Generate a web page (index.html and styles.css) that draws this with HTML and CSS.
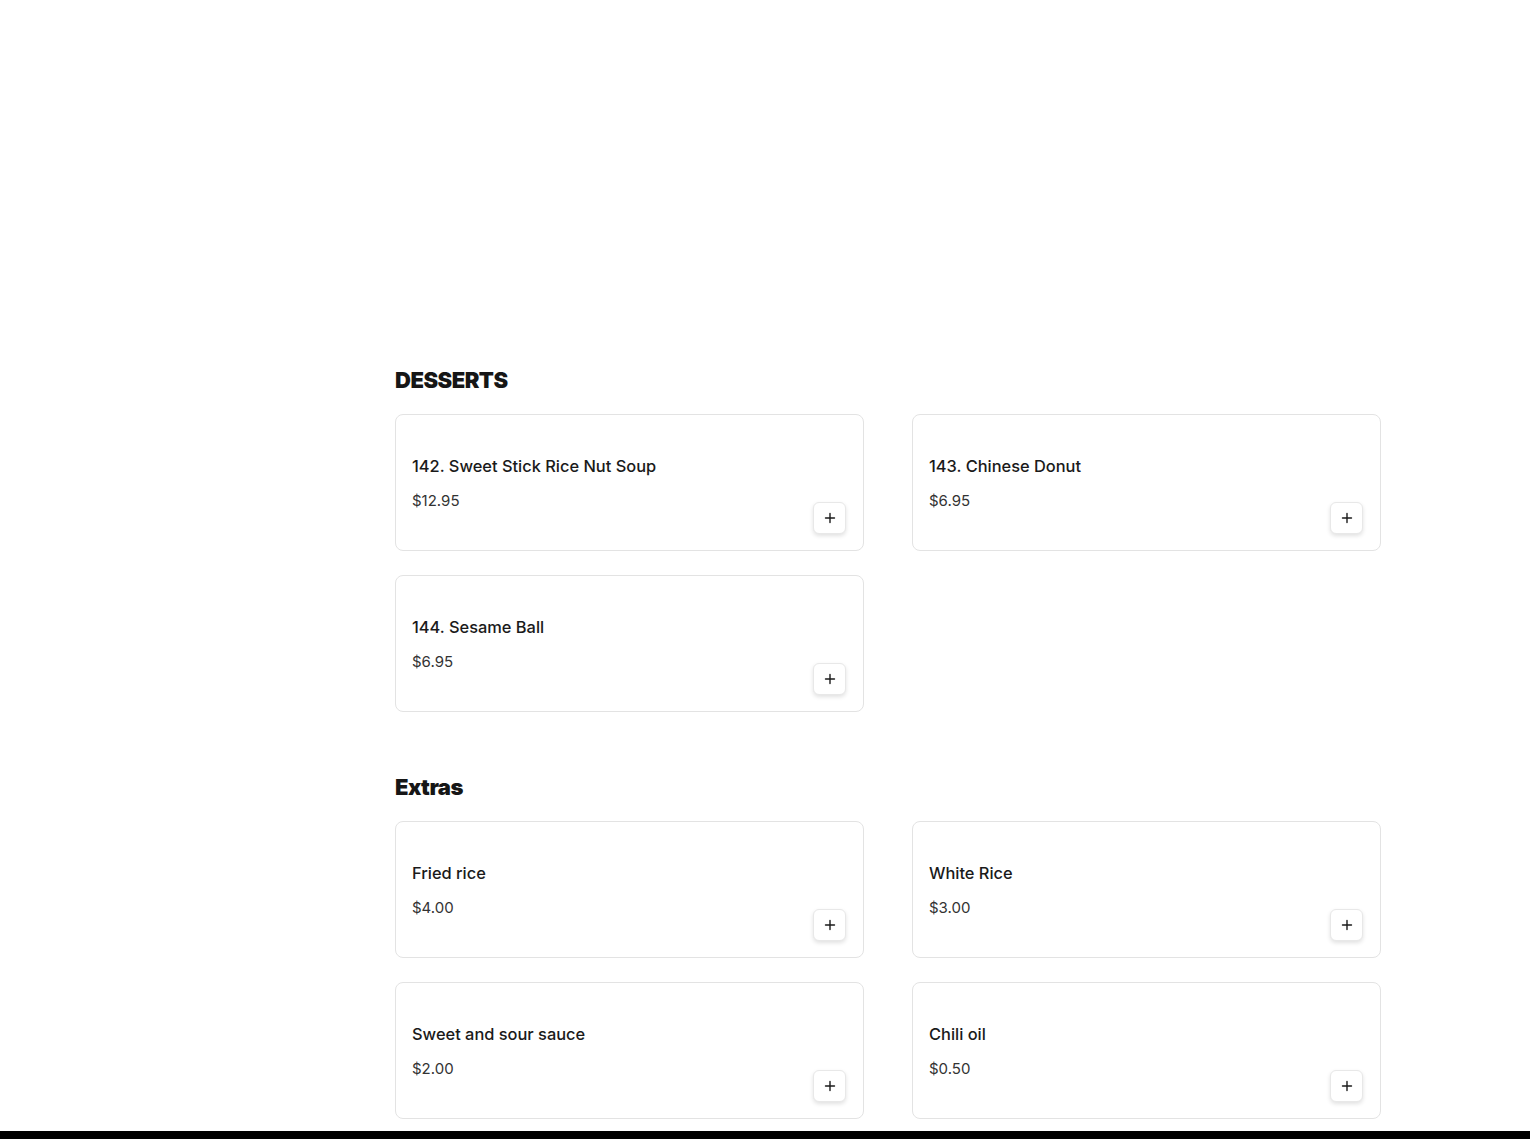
FILE: index.html
```html
<!DOCTYPE html>
<html lang="en">
<head>
<meta charset="utf-8">
<title>Menu</title>
<link rel="stylesheet" href="styles.css">
</head>
<body>
<main class="menu">
  <section class="category">
    <h2 class="category-title">DESSERTS</h2>
    <div class="items">
      <article class="item">
        <div class="info"><h3 class="name">142. Sweet Stick Rice Nut Soup</h3><p class="price">$12.95</p></div>
        <button class="add" aria-label="Add"><svg viewBox="0 0 12 12" width="12" height="12"><path d="M6 1.5v9M1.5 6h9" stroke="#1a1a1a" stroke-width="1.4" stroke-linecap="round"/></svg></button>
      </article>
      <article class="item">
        <div class="info"><h3 class="name">143. Chinese Donut</h3><p class="price">$6.95</p></div>
        <button class="add" aria-label="Add"><svg viewBox="0 0 12 12" width="12" height="12"><path d="M6 1.5v9M1.5 6h9" stroke="#1a1a1a" stroke-width="1.4" stroke-linecap="round"/></svg></button>
      </article>
      <article class="item">
        <div class="info"><h3 class="name">144. Sesame Ball</h3><p class="price">$6.95</p></div>
        <button class="add" aria-label="Add"><svg viewBox="0 0 12 12" width="12" height="12"><path d="M6 1.5v9M1.5 6h9" stroke="#1a1a1a" stroke-width="1.4" stroke-linecap="round"/></svg></button>
      </article>
    </div>
  </section>
  <section class="category">
    <h2 class="category-title">Extras</h2>
    <div class="items">
      <article class="item">
        <div class="info"><h3 class="name">Fried rice</h3><p class="price">$4.00</p></div>
        <button class="add" aria-label="Add"><svg viewBox="0 0 12 12" width="12" height="12"><path d="M6 1.5v9M1.5 6h9" stroke="#1a1a1a" stroke-width="1.4" stroke-linecap="round"/></svg></button>
      </article>
      <article class="item">
        <div class="info"><h3 class="name">White Rice</h3><p class="price">$3.00</p></div>
        <button class="add" aria-label="Add"><svg viewBox="0 0 12 12" width="12" height="12"><path d="M6 1.5v9M1.5 6h9" stroke="#1a1a1a" stroke-width="1.4" stroke-linecap="round"/></svg></button>
      </article>
      <article class="item">
        <div class="info"><h3 class="name">Sweet and sour sauce</h3><p class="price">$2.00</p></div>
        <button class="add" aria-label="Add"><svg viewBox="0 0 12 12" width="12" height="12"><path d="M6 1.5v9M1.5 6h9" stroke="#1a1a1a" stroke-width="1.4" stroke-linecap="round"/></svg></button>
      </article>
      <article class="item">
        <div class="info"><h3 class="name">Chili oil</h3><p class="price">$0.50</p></div>
        <button class="add" aria-label="Add"><svg viewBox="0 0 12 12" width="12" height="12"><path d="M6 1.5v9M1.5 6h9" stroke="#1a1a1a" stroke-width="1.4" stroke-linecap="round"/></svg></button>
      </article>
    </div>
  </section>
</main>
<div class="bottom-bar"></div>
</body>
</html>
```
FILE: styles.css
```css
* { box-sizing: border-box; }
html, body { margin: 0; padding: 0; background: #fff; }
body {
  font-family: Inter, "Liberation Sans", sans-serif;
  color: #1a1a1a;
}
.menu {
  margin-left: 395px;
  width: 986px;
  padding-top: 366px;
  display: flex;
  flex-direction: column;
  gap: 61px;
}
.category-title {
  margin: 0 0 19px;
  font-size: 22px;
  line-height: 29px;
  font-weight: 900;
  letter-spacing: -0.5px;
  color: #161616;
}
.items {
  display: grid;
  grid-template-columns: 1fr 1fr;
  column-gap: 48px;
  row-gap: 24px;
}
.item {
  height: 137px;
  border: 1px solid #e3e3e3;
  border-radius: 8px;
  padding: 16px 17px 16px 16px;
  display: flex;
  background: #fff;
}
.info { flex: 1; padding-top: 23px; }
.name {
  margin: 0;
  font-size: 16.4px;
  line-height: 24px;
  font-weight: 500;
  color: #1a1a1a;
}
.price {
  margin: 11px 0 0;
  font-size: 15px;
  line-height: 24px;
  font-weight: 400;
  color: #333;
}
.add {
  align-self: flex-end;
  width: 33px;
  height: 32px;
  padding: 0;
  border: 1px solid #e8e8e8;
  border-radius: 6px;
  background: #fff;
  box-shadow: 0 2px 4px rgba(0,0,0,0.12);
  display: flex;
  align-items: center;
  justify-content: center;
}
.add svg { display: block; }
.bottom-bar {
  position: fixed;
  left: 0;
  right: 0;
  bottom: 0;
  height: 8px;
  background: #000;
}
```
